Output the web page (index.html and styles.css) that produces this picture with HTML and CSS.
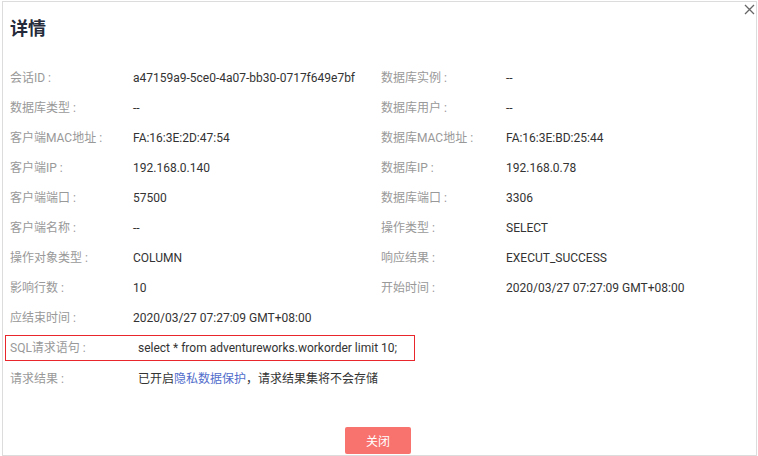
FILE: index.html
```html
<!DOCTYPE html>
<html lang="zh">
<head>
<meta charset="utf-8">
<title>详情</title>
<link rel="stylesheet" href="styles.css">
</head>
<body>
<div class="dialog">
  <button class="close" aria-label="关闭">
    <svg width="11" height="11" viewBox="0 0 11 11"><path d="M1 1L10 10M10 1L1 10" stroke="#666" stroke-width="1.3" fill="none"/></svg>
  </button>
  <h1 class="title">详情</h1>
  <div class="body">
    <div class="grid">
      <div class="label">会话ID :</div><div class="value">a47159a9-5ce0-4a07-bb30-0717f649e7bf</div>
      <div class="label">数据库实例 :</div><div class="value">--</div>
      <div class="label">数据库类型 :</div><div class="value">--</div>
      <div class="label">数据库用户 :</div><div class="value">--</div>
      <div class="label">客户端MAC地址 :</div><div class="value">FA:16:3E:2D:47:54</div>
      <div class="label">数据库MAC地址 :</div><div class="value">FA:16:3E:BD:25:44</div>
      <div class="label">客户端IP :</div><div class="value">192.168.0.140</div>
      <div class="label">数据库IP :</div><div class="value">192.168.0.78</div>
      <div class="label">客户端端口 :</div><div class="value">57500</div>
      <div class="label">数据库端口 :</div><div class="value">3306</div>
      <div class="label">客户端名称 :</div><div class="value">--</div>
      <div class="label">操作类型 :</div><div class="value">SELECT</div>
      <div class="label">操作对象类型 :</div><div class="value">COLUMN</div>
      <div class="label">响应结果 :</div><div class="value">EXECUT_SUCCESS</div>
      <div class="label">影响行数 :</div><div class="value">10</div>
      <div class="label">开始时间 :</div><div class="value">2020/03/27 07:27:09 GMT+08:00</div>
      <div class="label">应结束时间 :</div><div class="value">2020/03/27 07:27:09 GMT+08:00</div>
    </div>
    <div class="sql-row">
      <div class="label wide">SQL请求语句 :</div><div class="value">select * from adventureworks.workorder limit 10;</div>
    </div>
    <div class="result-row">
      <div class="label wide">请求结果 :</div><div class="value">已开启<a class="link" href="#">隐私数据保护</a>，请求结果集将不会存储</div>
    </div>
  </div>
  <div class="footer">
    <button class="btn">关闭</button>
  </div>
</div>
</body>
</html>
```
FILE: styles.css
```css
* { box-sizing: border-box; }
html, body { margin: 0; padding: 0; background: #fff; }
body {
  font-family: Roboto, "Noto Sans CJK SC", "Liberation Sans", sans-serif;
  font-size: 12px;
  color: #333;
}
.dialog {
  position: relative;
  margin: 1px 0 0 2px;
  width: 755px;
  height: 455px;
  border: 1px solid #dcdcdc;
  display: flex;
  flex-direction: column;
}
.close {
  position: absolute;
  top: 2px;
  right: 1px;
  width: 11px;
  height: 11px;
  padding: 0;
  border: 0;
  background: #fff;
  display: flex;
}
.title {
  margin: 15px 0 0 7px;
  font-size: 18px;
  line-height: 24px;
  font-weight: bold;
  color: #252b3a;
}
.body {
  margin-top: 22px;
  padding-left: 7px;
}
.grid {
  display: grid;
  grid-template-columns: 123px 248px 125px 1fr;
  grid-auto-rows: 30px;
  line-height: 30px;
}
.label { color: #999; white-space: nowrap; }
.value { color: #333; white-space: nowrap; }
.sql-row {
  display: flex;
  margin: 2px 0 3px -5px;
  width: 410px;
  height: 26px;
  line-height: 24px;
  border: 1px solid #e8262b;
  padding-left: 4px;
}
.wide { width: 128px; flex: none; }
.result-row {
  display: flex;
  line-height: 30px;
  height: 30px;
}
.link { color: #526ecc; text-decoration: none; }
.footer {
  margin-top: auto;
  display: flex;
  justify-content: center;
  padding: 0 3px 1px 0;
}
.btn {
  width: 66px;
  height: 27px;
  border: 0;
  border-radius: 2px;
  background: #f8736e;
  color: #fff;
  font-family: "Noto Sans CJK SC", sans-serif;
  font-size: 12px;
  padding: 0;
}
```
